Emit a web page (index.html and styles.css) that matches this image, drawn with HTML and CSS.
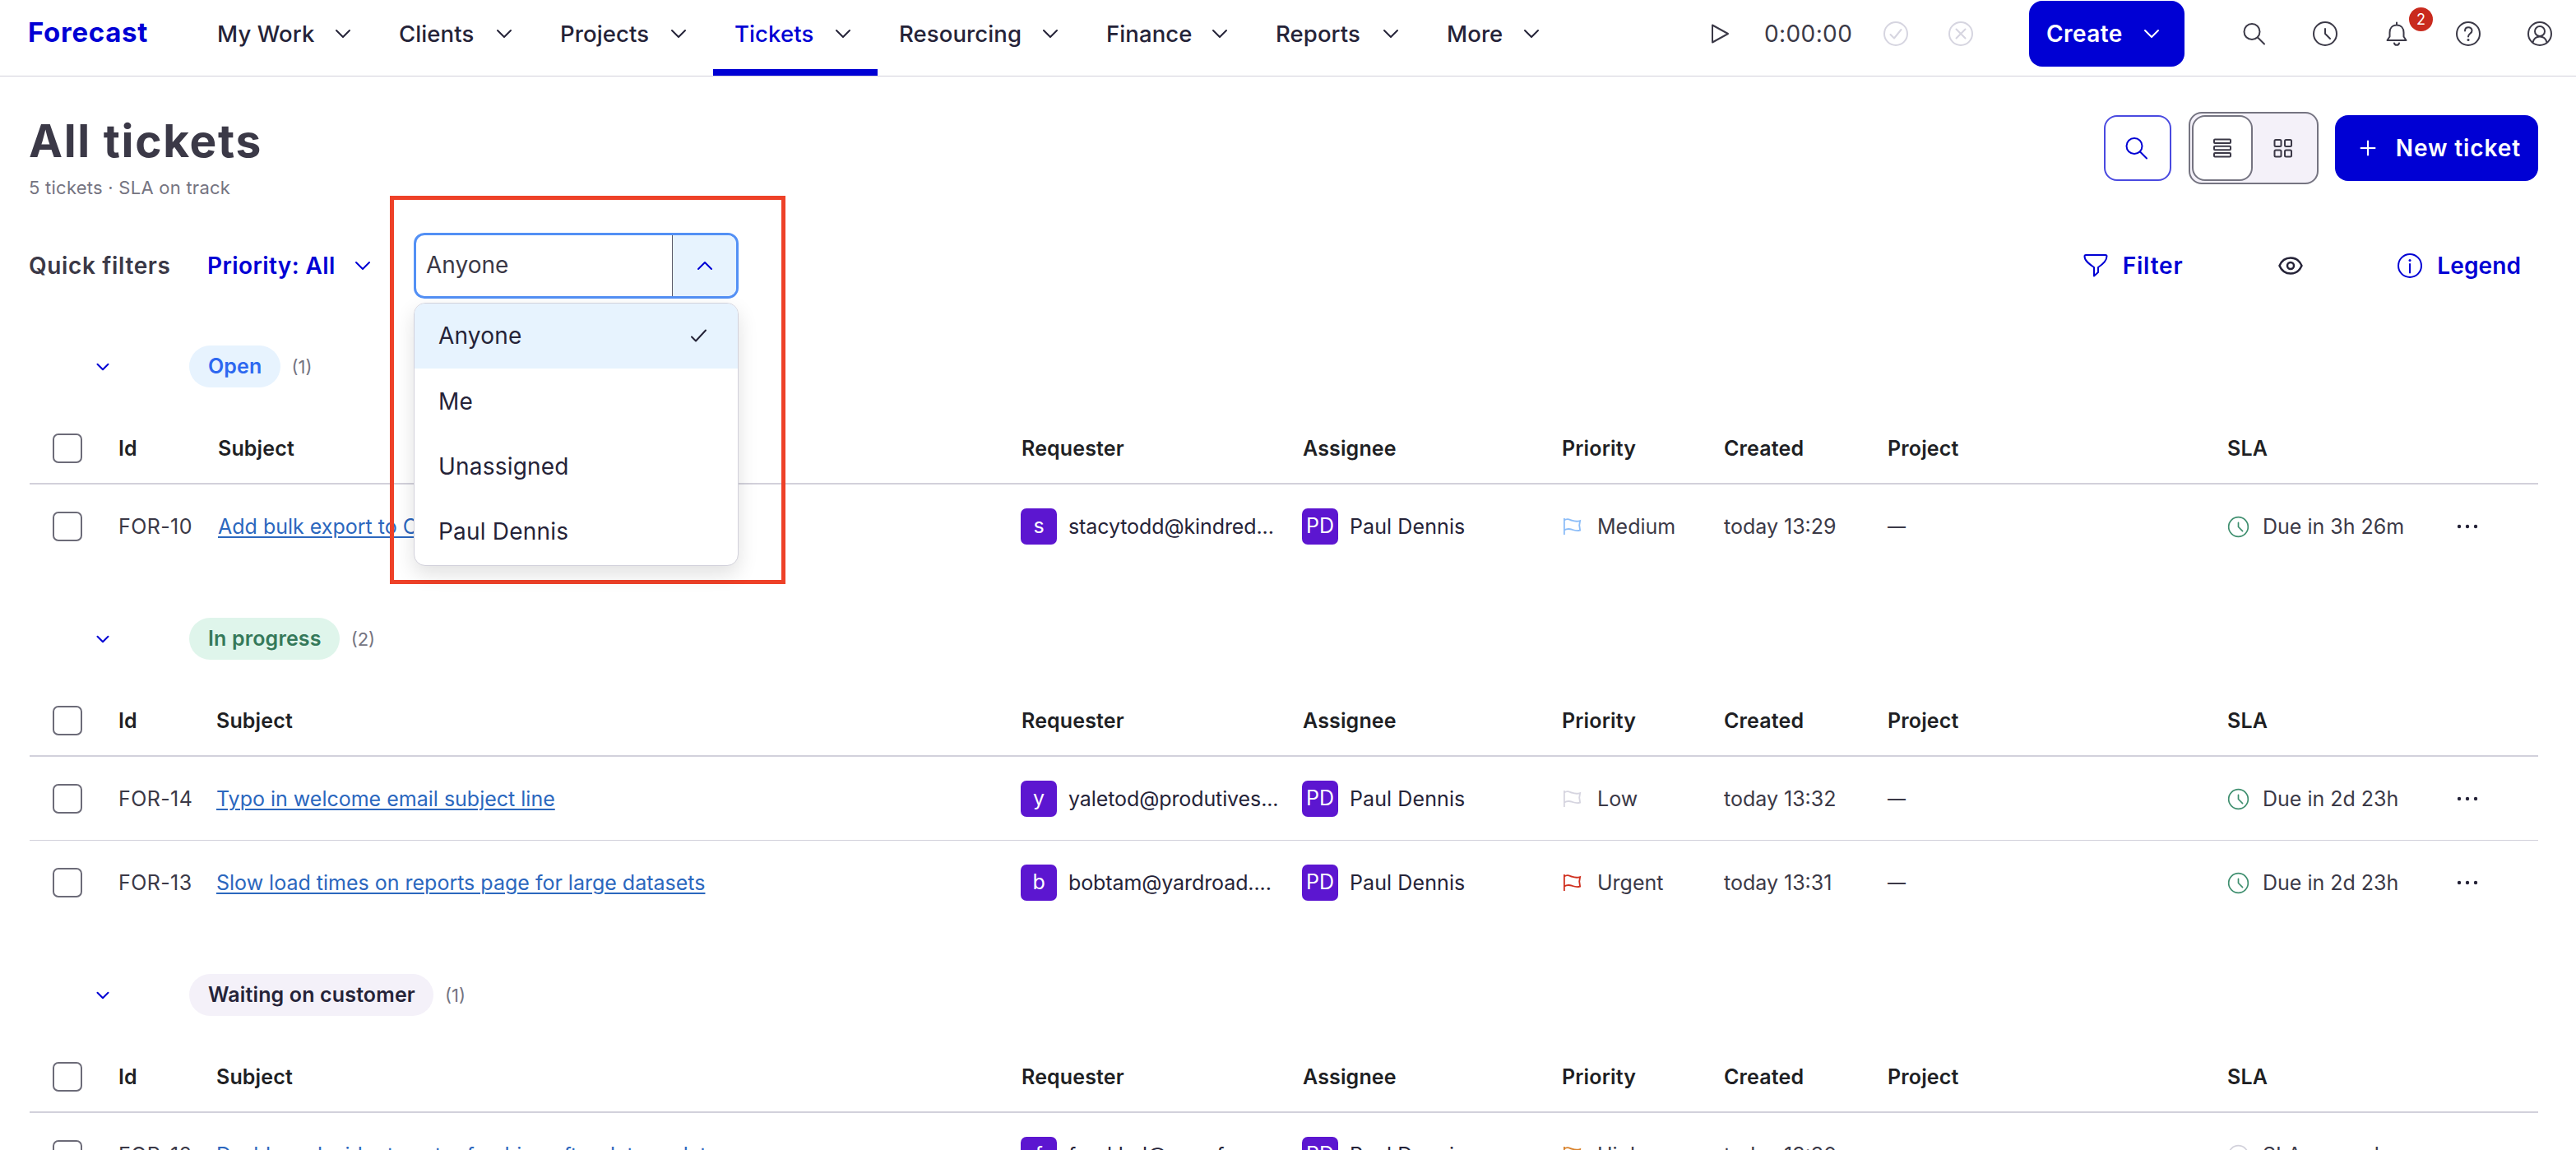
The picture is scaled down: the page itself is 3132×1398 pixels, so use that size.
FILE: index.html
```html
<!DOCTYPE html>
<html lang="en">
<head>
  <meta charset="UTF-8">
  <title>All tickets - Forecast</title>
  <link rel="stylesheet" href="styles.css">
</head>
<body>

  <!-- Icon sprite -->
  <svg class="sprite">
    <symbol id="chevron" viewBox="0 0 32 32"><path d="M8 12l8 8 8-8"/></symbol>
    <symbol id="chevron-up" viewBox="0 0 32 32"><path d="M8 20l8-8 8 8"/></symbol>
    <symbol id="play" viewBox="0 0 32 32"><path d="M7 5.500v21L26 16z"/></symbol>
    <symbol id="check-circle" viewBox="0 0 32 32"><circle cx="16" cy="16" r="14"/><path d="M9.500 17l4.500 4.500 8.500-10.500"/></symbol>
    <symbol id="x-circle" viewBox="0 0 32 32"><circle cx="16" cy="16" r="14"/><path d="M10.500 10.500l11 11M21.500 10.500l-11 11"/></symbol>
    <symbol id="search" viewBox="0 0 32 32"><circle cx="14" cy="13.500" r="9.500"/><path d="M21 20.500l8 8"/></symbol>
    <symbol id="clock" viewBox="0 0 32 32"><circle cx="16" cy="16" r="14"/><path d="M16 10v6l6 6"/></symbol>
    <symbol id="bell" viewBox="0 0 32 32"><path d="M16 2.500v3M16 5.500c-5.500 0-8.500 4-8.500 9v5l-3 4.500h23l-3-4.500v-5c0-5-3-9-8.500-9zM13 27.500c.5 3 5.500 3 6 0"/></symbol>
    <symbol id="help" viewBox="0 0 32 32"><circle cx="16" cy="16" r="14"/><path d="M12 12.500c0-5.500 8.500-5.500 8.500-.3 0 3.800-4.500 3.300-4.500 7.300"/><circle class="fill" cx="16" cy="23.500" r="1.500"/></symbol>
    <symbol id="user" viewBox="0 0 32 32"><circle cx="16" cy="16" r="14"/><circle cx="16" cy="13" r="6"/><path d="M7.500 26.500c1-4 4-7 8.500-7s7.500 3 8.500 7"/></symbol>
    <symbol id="list" viewBox="0 0 32 32"><rect x="6" y="5.500" width="20" height="4.500" rx="1"/><rect x="6" y="13.800" width="20" height="4.500" rx="1"/><rect x="6" y="22" width="20" height="4.500" rx="1"/></symbol>
    <symbol id="grid" viewBox="0 0 32 32"><rect x="5.500" y="6" width="8" height="8" rx="1.500"/><rect x="18" y="6" width="8" height="8" rx="1.500"/><rect x="5.500" y="18.500" width="8" height="8" rx="1.500"/><rect x="18" y="18.500" width="8" height="8" rx="1.500"/></symbol>
    <symbol id="plus" viewBox="0 0 32 32"><path d="M16 7.500v17M7.500 16h17"/></symbol>
    <symbol id="funnel" viewBox="0 0 32 32"><path d="M4 3h24c1 0 1.500.5 1.500 1.500C29.500 10 25 14 19 18v6l-5 4.500V18C8 14 2.500 10 2.500 4.500 2.500 3.500 3 3 4 3z"/></symbol>
    <symbol id="eye" viewBox="0 0 32 32"><path d="M2.500 16C5 10 10 6.500 16 6.500S27 10 29.500 16C27 22 22 25.500 16 25.500S5 22 2.500 16z"/><circle cx="16" cy="16" r="4"/></symbol>
    <symbol id="info" viewBox="0 0 32 32"><circle cx="16" cy="16" r="14"/><path d="M16 14v10.500"/><circle class="fill" cx="16" cy="9.500" r="1.500"/></symbol>
    <symbol id="check" viewBox="0 0 32 32"><path d="M7 17.500l5 5 12-13"/></symbol>
    <symbol id="flag" viewBox="0 0 24 24"><path d="M1.500 1v22M1.500 4c4-3.500 7-1 10 0s6 2 11 .5l-1 6 1 6.500c-5 1.500-8 0-11-1s-6-1.500-10 .8"/></symbol>
    <symbol id="dots" viewBox="0 0 32 32"><circle class="fill" cx="6" cy="16" r="2.200"/><circle class="fill" cx="16" cy="16" r="2.200"/><circle class="fill" cx="26" cy="16" r="2.200"/></symbol>
  </svg>

  <header class="topbar">
    <a class="logo">Forecast</a>
    <nav class="nav">
      <a class="nav-item">My Work <svg class="icon"><use href="#chevron"/></svg></a>
      <a class="nav-item">Clients <svg class="icon"><use href="#chevron"/></svg></a>
      <a class="nav-item">Projects <svg class="icon"><use href="#chevron"/></svg></a>
      <a class="nav-item active">Tickets <svg class="icon"><use href="#chevron"/></svg></a>
      <a class="nav-item">Resourcing <svg class="icon"><use href="#chevron"/></svg></a>
      <a class="nav-item">Finance <svg class="icon"><use href="#chevron"/></svg></a>
      <a class="nav-item">Reports <svg class="icon"><use href="#chevron"/></svg></a>
      <a class="nav-item">More <svg class="icon"><use href="#chevron"/></svg></a>
    </nav>
    <div class="timer">
      <svg class="icon"><use href="#play"/></svg>
      <span class="time">0:00:00</span>
      <svg class="icon muted"><use href="#check-circle"/></svg>
      <svg class="icon muted"><use href="#x-circle"/></svg>
    </div>
    <button class="btn btn-create">Create <svg class="icon"><use href="#chevron"/></svg></button>
    <div class="tools">
      <svg class="icon"><use href="#search"/></svg>
      <svg class="icon"><use href="#clock"/></svg>
      <span class="bell"><svg class="icon"><use href="#bell"/></svg><span class="badge">2</span></span>
      <svg class="icon"><use href="#help"/></svg>
      <svg class="icon"><use href="#user"/></svg>
    </div>
  </header>

  <main class="page">
    <div class="page-head">
      <div>
        <h1>All tickets</h1>
        <p class="subtitle">5 tickets · SLA on track</p>
      </div>
      <div class="actions">
        <button class="btn btn-search"><svg class="icon"><use href="#search"/></svg></button>
        <div class="view-toggle">
          <span class="view active"><svg class="icon"><use href="#list"/></svg></span>
          <span class="view"><svg class="icon"><use href="#grid"/></svg></span>
        </div>
        <button class="btn btn-new"><svg class="icon"><use href="#plus"/></svg> New ticket</button>
      </div>
    </div>

    <div class="filters">
      <span class="filters-label">Quick filters</span>
      <a class="priority-filter">Priority: All <svg class="icon"><use href="#chevron"/></svg></a>
      <div class="select">
        <div class="select-box">
          <span class="select-value">Anyone</span>
          <span class="select-arrow"><svg class="icon"><use href="#chevron-up"/></svg></span>
        </div>
        <ul class="menu">
          <li class="selected">Anyone <svg class="icon"><use href="#check"/></svg></li>
          <li>Me</li>
          <li>Unassigned</li>
          <li>Paul Dennis</li>
        </ul>
        <div class="highlight"></div>
      </div>
      <div class="filters-right">
        <a class="link-btn"><svg class="icon"><use href="#funnel"/></svg> Filter</a>
        <svg class="icon eye"><use href="#eye"/></svg>
        <a class="link-btn legend"><svg class="icon"><use href="#info"/></svg> Legend</a>
      </div>
    </div>

    <!-- Open -->
    <section class="group first">
      <div class="group-head">
        <svg class="icon"><use href="#chevron"/></svg>
        <span class="pill open">Open</span>
        <span class="count">(1)</span>
      </div>
      <div class="row head">
        <span class="checkbox"></span>
        <span>Id</span><span>Subject</span><span>Requester</span><span>Assignee</span><span>Priority</span><span>Created</span><span>Project</span><span>SLA</span>
      </div>
      <div class="row">
        <span class="checkbox"></span>
        <span class="id">FOR-10</span>
        <span><a class="subject">Add bulk export to CSV</a></span>
        <span class="person email"><i class="avatar">s</i>stacytodd@kindred...</span>
        <span class="person"><i class="avatar">PD</i>Paul Dennis</span>
        <span class="priority"><svg class="flag medium"><use href="#flag"/></svg>Medium</span>
        <span>today 13:29</span>
        <span class="dash">—</span>
        <span class="sla"><svg class="icon"><use href="#clock"/></svg>Due in 3h 26m</span>
        <svg class="icon more"><use href="#dots"/></svg>
      </div>
    </section>

    <!-- In progress -->
    <section class="group">
      <div class="group-head">
        <svg class="icon"><use href="#chevron"/></svg>
        <span class="pill progress">In progress</span>
        <span class="count">(2)</span>
      </div>
      <div class="row head">
        <span class="checkbox"></span>
        <span>Id</span><span>Subject</span><span>Requester</span><span>Assignee</span><span>Priority</span><span>Created</span><span>Project</span><span>SLA</span>
      </div>
      <div class="row">
        <span class="checkbox"></span>
        <span class="id">FOR-14</span>
        <span><a class="subject">Typo in welcome email subject line</a></span>
        <span class="person email"><i class="avatar">y</i>yaletod@produtives...</span>
        <span class="person"><i class="avatar">PD</i>Paul Dennis</span>
        <span class="priority"><svg class="flag low"><use href="#flag"/></svg>Low</span>
        <span>today 13:32</span>
        <span class="dash">—</span>
        <span class="sla"><svg class="icon"><use href="#clock"/></svg>Due in 2d 23h</span>
        <svg class="icon more"><use href="#dots"/></svg>
      </div>
      <div class="row">
        <span class="checkbox"></span>
        <span class="id">FOR-13</span>
        <span><a class="subject">Slow load times on reports page for large datasets</a></span>
        <span class="person email"><i class="avatar">b</i>bobtam@yardroad....</span>
        <span class="person"><i class="avatar">PD</i>Paul Dennis</span>
        <span class="priority"><svg class="flag urgent"><use href="#flag"/></svg>Urgent</span>
        <span>today 13:31</span>
        <span class="dash">—</span>
        <span class="sla"><svg class="icon"><use href="#clock"/></svg>Due in 2d 23h</span>
        <svg class="icon more"><use href="#dots"/></svg>
      </div>
    </section>

    <!-- Waiting on customer -->
    <section class="group">
      <div class="group-head">
        <svg class="icon"><use href="#chevron"/></svg>
        <span class="pill waiting">Waiting on customer</span>
        <span class="count">(1)</span>
      </div>
      <div class="row head">
        <span class="checkbox"></span>
        <span>Id</span><span>Subject</span><span>Requester</span><span>Assignee</span><span>Priority</span><span>Created</span><span>Project</span><span>SLA</span>
      </div>
      <div class="row">
        <span class="checkbox"></span>
        <span class="id">FOR-12</span>
        <span><a class="subject">Dashboard widgets not refreshing after data update</a></span>
        <span class="person email"><i class="avatar">f</i>frankbal@moref...</span>
        <span class="person"><i class="avatar">PD</i>Paul Dennis</span>
        <span class="priority"><svg class="flag high"><use href="#flag"/></svg>High</span>
        <span>today 13:30</span>
        <span class="dash">—</span>
        <span class="sla paused"><svg class="icon"><use href="#clock"/></svg>SLA paused</span>
        <svg class="icon more"><use href="#dots"/></svg>
      </div>
    </section>
  </main>

</body>
</html>
```
FILE: styles.css
```css
* {
  box-sizing: border-box;
}

body {
  margin: 0;
  height: 1398px;
  overflow: hidden;
  font-family: Inter, "Liberation Sans", sans-serif;
  font-size: 25px;
  color: #3b3947;
  background: #fff;
}

.sprite {
  position: absolute;
  width: 0;
  height: 0;
}

.icon {
  width: 32px;
  height: 32px;
  flex: none;
  fill: none;
  stroke: currentColor;
  stroke-width: 2;
  stroke-linecap: round;
  stroke-linejoin: round;
}

.fill {
  fill: currentColor;
  stroke: none;
}

/* Top bar */
.topbar {
  display: flex;
  align-items: center;
  height: 93px;
  border-bottom: 1px solid #d2d1db;
}

.logo {
  width: 238px;
  padding: 0 0 15px 34px;
  font-size: 33px;
  font-weight: 700;
  letter-spacing: 0.7px;
  color: #0000d4;
}

.nav {
  display: grid;
  grid-template-columns: 221px 196px 212px 200px 252px 206px 208px 171px;
  align-self: stretch;
  width: 1822px;
}

.nav-item {
  display: flex;
  justify-content: space-between;
  align-items: center;
  padding: 0 26px 10px;
  font-size: 27.5px;
  font-weight: 500;
  letter-spacing: 0.1px;
  white-space: nowrap;
  color: #252338;
  border-bottom: 0 solid #0000d4;
}

.nav-item.active {
  color: #0000d4;
  padding-bottom: 2px;
  border-bottom-width: 8px;
}

.nav-item.active .icon {
  color: #252338;
}

.timer {
  display: flex;
  align-items: center;
  width: 407px;
  padding: 0 0 10px 15px;
}

.time {
  width: 144px;
  padding-left: 38px;
  box-sizing: content-box;
  font-size: 28px;
  letter-spacing: 0.4px;
}

.timer .muted {
  margin-right: 47px;
}

.muted {
  color: #d6d5e0;
}

.btn {
  display: flex;
  align-items: center;
  height: 80px;
  border: 0;
  border-radius: 16px;
  font-family: inherit;
  font-size: 28px;
  font-weight: 600;
  color: #fff;
  background: #0000d4;
  white-space: nowrap;
}

.btn-create {
  align-self: flex-start;
  justify-content: space-between;
  width: 189px;
  margin-top: 1px;
  padding: 0 24px 0 21px;
  letter-spacing: 0.4px;
}

.tools {
  display: flex;
  gap: 55px;
  padding: 0 0 10px 68px;
}

.bell {
  position: relative;
  height: 32px;
}

.badge {
  position: absolute;
  left: 31px;
  top: -16px;
  width: 29px;
  height: 29px;
  border-radius: 50%;
  font-size: 18px;
  line-height: 29px;
  text-align: center;
  color: #fff;
  background: #c92a1e;
}

/* Page header */
.page {
  padding: 43px 46px 0 35px;
}

.page-head {
  display: flex;
  justify-content: space-between;
  height: 147px;
}

h1 {
  margin: 0;
  font-size: 55px;
  line-height: 70px;
  font-weight: 700;
  letter-spacing: 1.7px;
}

.subtitle {
  margin: 8px 0 0;
  font-size: 22px;
  line-height: 28px;
  letter-spacing: 0.25px;
  color: #757481;
}

.actions {
  display: flex;
  align-items: center;
  height: 88px;
}

.btn-search {
  justify-content: center;
  width: 82px;
  padding: 0 4px 0 0;
  color: #0000d4;
  background: #fff;
  border: 2px solid #4a4ae0;
}

.view-toggle {
  display: flex;
  align-items: center;
  width: 158px;
  height: 88px;
  margin: 0 20px 0 21px;
  padding-left: 2px;
  border: 2px solid #757481;
  border-radius: 16px;
  background: #f4f1f9;
}

.view {
  display: flex;
  align-items: center;
  justify-content: center;
  width: 74px;
  height: 80px;
}

.view.active {
  border: 2px solid #757481;
  border-radius: 16px;
  background: #fff;
}

.btn-new {
  width: 247px;
  padding: 0 21px 0 24px;
  justify-content: space-between;
  letter-spacing: 0.9px;
}

/* Filters */
.filters {
  display: flex;
  align-items: center;
  height: 80px;
  font-size: 28px;
}

.filters-label {
  width: 217px;
  font-weight: 600;
  letter-spacing: 0.65px;
}

.priority-filter {
  display: flex;
  align-items: center;
  justify-content: space-between;
  width: 205px;
  font-weight: 600;
  letter-spacing: 0.4px;
  color: #0000d4;
}

.select {
  position: relative;
  width: 395px;
  margin-left: 46px;
}

.select-box {
  display: flex;
  height: 80px;
  border: 3px solid #5390f5;
  border-radius: 13px;
  overflow: hidden;
}

.select-value {
  flex: 1;
  padding-left: 12px;
  line-height: 73px;
}

.select-arrow {
  display: flex;
  align-items: center;
  justify-content: center;
  width: 78px;
  border-left: 1px solid #5c5b69;
  color: #0000d4;
  background: #e7f3fe;
}

.menu {
  position: absolute;
  z-index: 2;
  left: 0;
  top: 85px;
  width: 395px;
  margin: 0;
  padding: 0;
  list-style: none;
  border: 1px solid #d2d1db;
  border-radius: 14px;
  background: #fff;
  color: #252338;
  letter-spacing: 0.2px;
  overflow: hidden;
  box-shadow: 0 10px 24px rgba(0, 0, 0, 0.12);
}

.menu li {
  display: flex;
  align-items: center;
  justify-content: space-between;
  height: 79.4px;
  padding: 0 31px 1px 29px;
}

.menu .selected {
  background: #e7f3fe;
}

.highlight {
  position: absolute;
  z-index: 1;
  left: -29px;
  top: -45px;
  width: 481px;
  height: 472px;
  border: 5px solid #ee4128;
}

.filters-right {
  display: flex;
  align-items: center;
  margin-left: auto;
  padding-right: 21px;
}

.link-btn {
  display: flex;
  align-items: center;
  gap: 17px;
  font-weight: 600;
  letter-spacing: 0.8px;
  color: #0000d4;
}

.legend {
  letter-spacing: 0.1px;
}

.eye {
  margin: 0 113px 0 115px;
  color: #252338;
  stroke-width: 2.5;
}

/* Ticket groups */
.group {
  margin-top: 60px;
}

.group.first {
  margin-top: 57px;
}

.group-head {
  display: flex;
  align-items: center;
  height: 51px;
  margin-bottom: 32px;
  padding-left: 77px;
}

.group-head .icon {
  width: 26px;
  height: 26px;
  margin-right: 92px;
  stroke-width: 2.5;
  color: #0000d4;
}

.pill {
  height: 51px;
  padding: 0 22px 0 23px;
  border-radius: 26px;
  line-height: 50px;
  font-weight: 600;
  letter-spacing: 0.15px;
}

.open {
  color: #2d68f0;
  background: #e7f3fe;
}

.progress {
  color: #35795a;
  background: #dff5eb;
}

.waiting {
  color: #252338;
  background: #f4f1f9;
}

.count {
  margin-left: 14px;
  font-size: 22px;
  color: #757481;
}

.row {
  display: grid;
  grid-template-columns: 80px 119px 979px 342px 315px 197px 199px 413px 276px 40px;
  align-items: center;
  height: 102px;
  margin-left: 1px;
  padding-left: 28px;
  white-space: nowrap;
}

/* separator between tickets of one group */
.row + .row + .row {
  box-shadow: 0 -1px 0 #d2d1db;
}

.row.head {
  height: 86px;
  border-bottom: 2px solid #d2d1db;
  font-weight: 600;
  letter-spacing: 0.15px;
  color: #201f24;
}

.first .row {
  grid-template-columns: 80px 121px 977px 342px 315px 197px 199px 413px 276px 40px;
}

.checkbox {
  width: 36px;
  height: 36px;
  border: 2px solid #6c6b78;
  border-radius: 7px;
}

.id {
  letter-spacing: 0.4px;
}

.subject {
  color: #2b67be;
  text-decoration: underline;
  text-decoration-thickness: 2px;
  text-underline-offset: 3px;
}

.person {
  display: flex;
  align-items: center;
  letter-spacing: 0.1px;
  color: #252338;
}

.email {
  letter-spacing: -0.1px;
}

.avatar {
  width: 44px;
  height: 44px;
  margin: 0 14px 0 -1px;
  border-radius: 7px;
  font-style: normal;
  line-height: 43px;
  text-align: center;
  color: #fff;
  background: #5c16d0;
}

.priority,
.sla {
  display: flex;
  align-items: center;
}

.flag {
  width: 25px;
  height: 22px;
  margin-right: 18px;
  fill: none;
  stroke: currentColor;
  stroke-width: 2;
}

.medium {
  color: #8cbdf8;
}

.low {
  color: #d6d5e0;
}

.urgent {
  color: #d0301f;
}

.high {
  color: #d9822b;
}

.dash {
  font-size: 22px;
  font-weight: 500;
}

.sla .icon {
  width: 27px;
  height: 27px;
  margin-right: 16px;
  color: #3f8f6f;
}

.sla.paused .icon {
  color: #d2d1db;
}

.more {
  color: #252338;
}
```
